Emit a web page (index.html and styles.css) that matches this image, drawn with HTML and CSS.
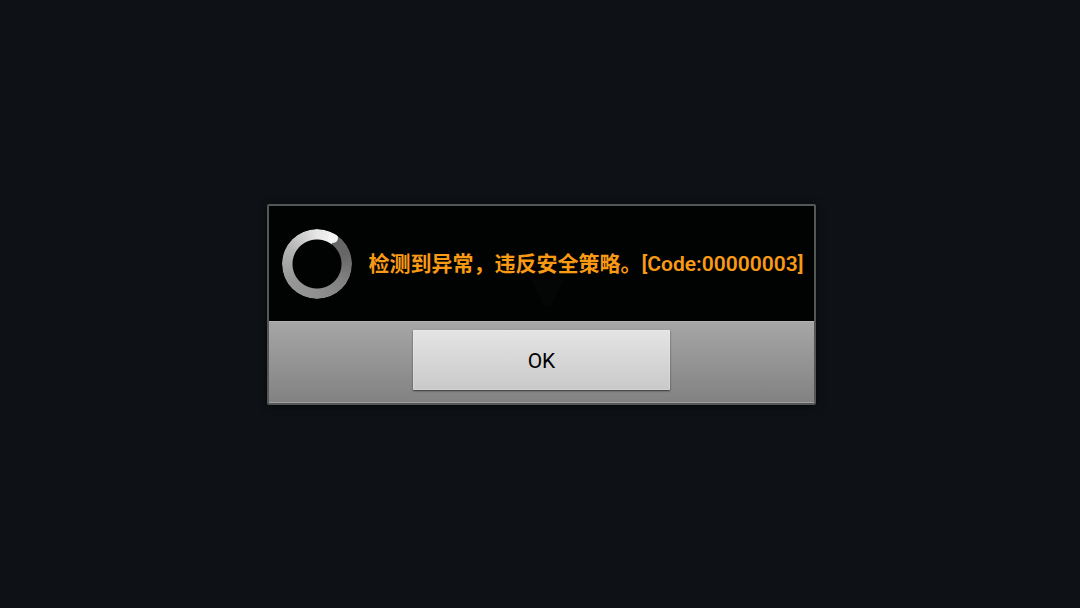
FILE: index.html
```html
<!DOCTYPE html>
<html lang="zh-CN">
<head>
    <meta charset="UTF-8">
    <meta name="viewport" content="width=device-width, initial-scale=1.0">
    <title>安全提示</title>
    <link rel="stylesheet" href="styles.css">
</head>
<body>
    <div class="dialog" role="alertdialog" aria-describedby="message">
        <div class="dialog-body">
            <div class="spinner"><span class="spinner-head"></span></div>
            <p class="message" id="message">检测到异常，违反安全策略。[Code:00000003]</p>
        </div>
        <div class="dialog-footer">
            <button type="button" class="btn-ok">OK</button>
        </div>
    </div>
</body>
</html>
```
FILE: styles.css
```css
* {
    box-sizing: border-box;
}

body {
    margin: 0;
    padding: 1px 0 0 3px;
    min-height: 100vh;
    display: flex;
    align-items: center;
    justify-content: center;
    background: #0e1217;
    font-family: Roboto, "Noto Sans CJK SC", sans-serif;
}

.dialog {
    border: 2px solid #555656;
    border-radius: 2px;
    background: #000;
    box-shadow: 0 1px 8px rgba(0, 0, 0, 0.7);
}

.dialog-body {
    position: relative;
    display: flex;
    align-items: center;
    gap: 17px;
    padding: 23px 11px 22px 13px;
    background: #010202;
}

/* 背景里隐约的箭头 */
.dialog-body::after {
    content: "";
    position: absolute;
    left: 50%;
    bottom: 15px;
    width: 32px;
    height: 26px;
    margin-left: -10px;
    background: #040606;
    clip-path: polygon(0 0, 100% 0, 62% 100%, 38% 100%);
}

/* 加载圆环 */
.spinner {
    position: relative;
    flex: none;
    width: 70px;
    height: 70px;
    border-radius: 50%;
    background: conic-gradient(#e6e6e6 0deg, #f4f4f4 35deg, #666 37deg, #666 70deg, #808080 120deg, #909090 180deg, #979797 240deg, #b4b4b4 300deg, #e6e6e6 360deg);
    -webkit-mask: radial-gradient(circle, transparent 24px, #000 25px);
    mask: radial-gradient(circle, transparent 24px, #000 25px);
}

.spinner-head {
    position: absolute;
    top: 4px;
    right: 14px;
    width: 10px;
    height: 10px;
    border-radius: 50%;
    background: #f4f4f4;
}

.message {
    position: relative;
    z-index: 1;
    margin: 0;
    color: #f89a14;
    font-size: 21px;
    font-weight: 600;
    line-height: 28px;
}

.dialog-footer {
    display: flex;
    justify-content: center;
    padding: 8px 12px 12px;
    border-top: 1px solid #b4b4b4;
    border-bottom: 1px solid #a0a0a0;
    background: linear-gradient(#a6a6a6, #828282);
}

.btn-ok {
    width: 47%;
    min-width: 257px;
    height: 60px;
    padding: 2px 0 0;
    border: 0;
    border-radius: 1px;
    background: linear-gradient(#e4e4e4, #c9c9c9);
    box-shadow: 0 1px 2px rgba(0, 0, 0, 0.6), inset 0 0 1px 1px rgba(255, 255, 255, 0.2);
    color: #000;
    font-family: inherit;
    font-size: 21px;
}
```
